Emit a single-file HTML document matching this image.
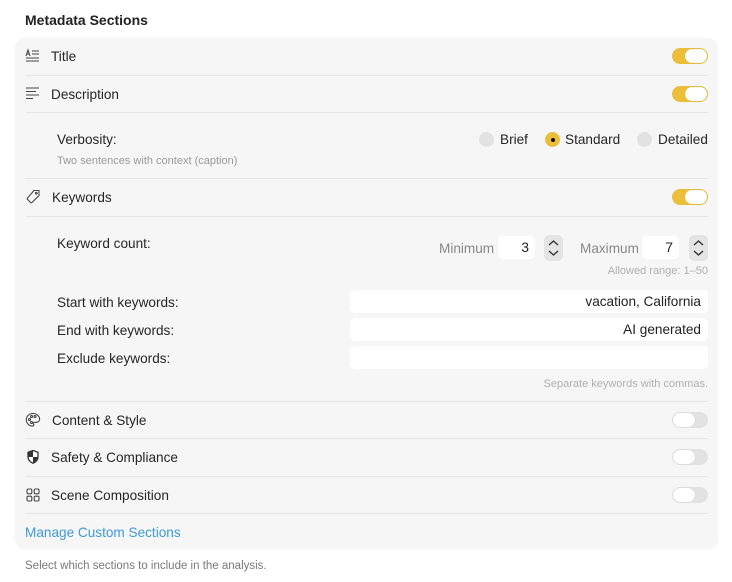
<!DOCTYPE html>
<html><head><meta charset="utf-8"><style>
*{margin:0;padding:0;box-sizing:border-box}
body{width:732px;height:582px;background:#fff;font-family:"Liberation Sans",sans-serif;color:#262626;position:relative;overflow:hidden}
.a{position:absolute;white-space:nowrap}
.card{position:absolute;left:15px;top:38px;width:703px;height:510px;background:#f6f6f6;border-radius:10px;box-shadow:0 1px 2px rgba(0,0,0,.04)}
.sep{position:absolute;left:25px;width:683px;height:1px;background:#e6e6e6}
.lbl{font-size:13.6px;line-height:18px}
.tg{position:absolute;left:672px;width:36px;height:16px;border-radius:8px}
.tg.on{background:#ecbf3a}
.tg.off{background:#e2e2e2}
.tg::after{content:"";position:absolute;top:1px;width:22px;height:14px;border-radius:7px;background:#fff;box-shadow:0 0 1px rgba(0,0,0,.2)}
.tg.on::after{right:1px}
.tg.off::after{left:1px}
.fld{position:absolute;left:350px;width:358px;height:23px;background:#fff;border-radius:5px;font-size:13.6px;line-height:24px;text-align:right;padding-right:7px;color:#222}
.rad{position:absolute;width:15px;height:15px;border-radius:50%;background:#e2e2e2}
.small{font-size:11px;color:#9a9a9a}
.step{position:absolute;width:19px;height:26px;background:#e4e4e4;border-radius:5px}
.nb{position:absolute;width:37px;height:23px;background:#fff;border-radius:5px;font-size:14px;line-height:23px;text-align:right;padding-right:6px}
svg{position:absolute}
</style></head><body>
<div class="a" style="left:25px;top:12px;font-size:14px;font-weight:bold;color:#222">Metadata Sections</div>
<div class="card"></div>

<svg style="left:25px;top:48px" width="16" height="16" viewBox="0 0 16 16" fill="none" stroke="#444" stroke-width="1.1"><path d="M1 8L3 2L5 8M1.8 6H4.2M7 3h7M7 6h7M1 10h13M1 13h13"/></svg>
<div class="a lbl" style="left:51px;top:48px">Title</div>
<div class="tg on" style="top:48px"></div>
<div class="sep" style="top:75px"></div>

<svg style="left:25px;top:86px" width="16" height="16" viewBox="0 0 16 16" fill="none" stroke="#444" stroke-width="1.1"><path d="M1 2h13M1 5.5h10M1 9h13M1 12.5h7"/></svg>
<div class="a lbl" style="left:51px;top:86px">Description</div>
<div class="tg on" style="top:86px"></div>
<div class="sep" style="top:112px"></div>

<div class="a lbl" style="left:57px;top:131px">Verbosity:</div>
<div class="a small" style="left:57px;top:155px">Two sentences with context (caption)</div>
<div class="rad" style="left:479px;top:132px"></div>
<div class="a lbl" style="left:500px;top:131px">Brief</div>
<div class="rad" style="left:545px;top:132px;background:#ecbf3a"></div>
<div class="a" style="left:550.5px;top:137.5px;width:4px;height:4px;border-radius:50%;background:#111"></div>
<div class="a lbl" style="left:565px;top:131px">Standard</div>
<div class="rad" style="left:637px;top:132px"></div>
<div class="a lbl" style="left:658px;top:131px">Detailed</div>
<div class="sep" style="top:178px"></div>

<svg style="left:25px;top:189px" width="16" height="16" viewBox="0 0 16 16" fill="none" stroke="#444" stroke-width="1.1"><path d="M9 1.5h5v5L7 13.5a1 1 0 0 1-1.4 0L2.5 10.4a1 1 0 0 1 0-1.4Z"/><circle cx="11.3" cy="4.2" r="0.8"/></svg>
<div class="a lbl" style="left:52px;top:189px">Keywords</div>
<div class="tg on" style="top:189px"></div>
<div class="sep" style="top:216px"></div>

<div class="a lbl" style="left:57px;top:235px">Keyword count:</div>
<div class="a lbl" style="left:439px;top:240px;color:#888">Minimum</div>
<div class="nb" style="left:498px;top:236px">3</div>
<div class="step" style="left:544px;top:235px"></div>
<svg style="left:544px;top:235px" width="19" height="26" viewBox="0 0 19 26" fill="none" stroke="#333" stroke-width="1.4"><path d="M5 10l4.5-4 4.5 4M5 16l4.5 4 4.5-4"/></svg>
<div class="a lbl" style="left:580px;top:240px;color:#888">Maximum</div>
<div class="nb" style="left:642px;top:236px">7</div>
<div class="step" style="left:689px;top:235px"></div>
<svg style="left:689px;top:235px" width="19" height="26" viewBox="0 0 19 26" fill="none" stroke="#333" stroke-width="1.4"><path d="M5 10l4.5-4 4.5 4M5 16l4.5 4 4.5-4"/></svg>
<div class="a small" style="right:24px;top:265px;color:#b0b0b0">Allowed range: 1–50</div>

<div class="a lbl" style="left:57px;top:294px">Start with keywords:</div>
<div class="fld" style="top:290px">vacation, California</div>
<div class="a lbl" style="left:57px;top:322px">End with keywords:</div>
<div class="fld" style="top:318px">AI generated</div>
<div class="a lbl" style="left:57px;top:350px">Exclude keywords:</div>
<div class="fld" style="top:346px"></div>
<div class="a small" style="right:24px;top:378px;color:#b0b0b0">Separate keywords with commas.</div>
<div class="sep" style="top:401px"></div>

<svg style="left:25px;top:412px" width="16" height="16" viewBox="0 0 16 16" fill="none" stroke="#444" stroke-width="1.1"><path d="M8 1.5C4 1.5 1.3 4.3 1.3 7.8c0 3.5 2.8 6.3 6.3 6.3 1.3 0 1.6-.9 1-1.8-.6-.9-.2-2 .9-2h2c1.7 0 3.1-1.2 3.1-3C14.6 4 11.8 1.5 8 1.5Z"/><circle cx="4.5" cy="7.5" r="1"/><circle cx="6.5" cy="4.5" r="1"/><circle cx="10" cy="4.5" r="1"/><circle cx="6.5" cy="10.5" r="1"/></svg>
<div class="a lbl" style="left:52px;top:412px">Content &amp; Style</div>
<div class="tg off" style="top:412px"></div>
<div class="sep" style="top:438px"></div>

<svg style="left:25px;top:449px" width="16" height="16" viewBox="0 0 16 16"><path d="M8 1.5L3 3.3v4.5c0 3 2.3 5.3 5 6.5 2.7-1.2 5-3.5 5-6.5V3.3Z" fill="#fff" stroke="#333" stroke-width="1.3"/><path d="M8 1.5v6.5H3V3.3ZM8 8h5c0 3-2.3 5.3-5 6.3Z" fill="#333"/></svg>
<div class="a lbl" style="left:51px;top:449px">Safety &amp; Compliance</div>
<div class="tg off" style="top:449px"></div>
<div class="sep" style="top:476px"></div>

<svg style="left:25px;top:487px" width="16" height="16" viewBox="0 0 16 16" fill="none" stroke="#444" stroke-width="1.1"><rect x="2" y="2" width="4.8" height="4.8" rx="1.2"/><rect x="9.2" y="2" width="4.8" height="4.8" rx="1.2"/><rect x="2" y="9.2" width="4.8" height="4.8" rx="1.2"/><rect x="9.2" y="9.2" width="4.8" height="4.8" rx="1.2"/></svg>
<div class="a lbl" style="left:51px;top:487px">Scene Composition</div>
<div class="tg off" style="top:487px"></div>
<div class="sep" style="top:513px"></div>

<div class="a lbl" style="left:25px;top:524px;color:#3d9bd9">Manage Custom Sections</div>
<div class="a" style="left:25px;top:560px;font-size:11.5px;color:#7a7a7a">Select which sections to include in the analysis.</div>
</body></html>
